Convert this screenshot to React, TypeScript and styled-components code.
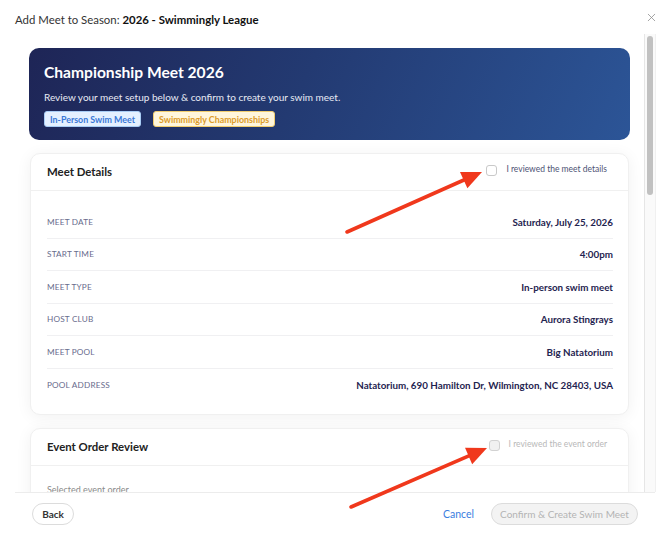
import { X } from "lucide-react";
import styled, { createGlobalStyle } from "styled-components";

const GlobalStyle = createGlobalStyle`
  html, body {
    margin: 0;
    padding: 0;
    background: #fff;
  }
  body {
    font-family: "Lato", "Open Sans", sans-serif;
    color: #222;
  }
  * {
    box-sizing: border-box;
  }
`;

const meetRows = [
  { label: "Meet Date", value: "Saturday, July 25, 2026" },
  { label: "Start Time", value: "4:00pm" },
  { label: "Meet Type", value: "In-person swim meet" },
  { label: "Host Club", value: "Aurora Stingrays" },
  { label: "Meet Pool", value: "Big Natatorium" },
  { label: "Pool Address", value: "Natatorium, 690 Hamilton Dr, Wilmington, NC 28403, USA" },
];

// order of events for the meet (below the fold in the screenshot)
const events = [
  "Mixed 8 & Under 100 Medley Relay",
  "Mixed 9-10 200 Medley Relay",
  "Mixed 11-12 200 Medley Relay",
  "Mixed 13-14 200 Medley Relay",
  "Mixed 15-18 200 Medley Relay",
  "Girls 8 & Under 25 Freestyle",
  "Boys 8 & Under 25 Freestyle",
  "Girls 9-10 50 Freestyle",
  "Boys 9-10 50 Freestyle",
  "Girls 11-12 50 Freestyle",
  "Boys 11-12 50 Freestyle",
  "Girls 13-14 50 Freestyle",
  "Boys 13-14 50 Freestyle",
  "Girls 15-18 50 Freestyle",
  "Boys 15-18 50 Freestyle",
];

const App = (): JSX.Element => {
  return (
    <>
      <GlobalStyle />
      <Modal>
        <Header>
          <HeaderTitle>
            Add Meet to Season: <strong>2026 - Swimmingly League</strong>
          </HeaderTitle>
          <CloseButton aria-label="Close">
            <X size={13} strokeWidth={1.4} />
          </CloseButton>
        </Header>

        <Body>
          <Content>
            <Banner>
              <BannerTitle>Championship Meet 2026</BannerTitle>
              <BannerText>
                Review your meet setup below &amp; confirm to create your swim meet.
              </BannerText>
              <Badges>
                <Badge $tone="blue">In-Person Swim Meet</Badge>
                <Badge $tone="yellow">Swimmingly Championships</Badge>
              </Badges>
            </Banner>

            <Card>
              <CardHeader>
                <CardTitle>Meet Details</CardTitle>
                <Review>
                  <Checkbox />
                  <ReviewLabel>I reviewed the meet details</ReviewLabel>
                </Review>
              </CardHeader>
              <CardBody>
                {meetRows.map((row) => (
                  <Row key={row.label}>
                    <RowLabel>{row.label}</RowLabel>
                    <RowValue>{row.value}</RowValue>
                  </Row>
                ))}
              </CardBody>
            </Card>

            <Card>
              <CardHeader>
                <CardTitle>Event Order Review</CardTitle>
                <Review>
                  <Checkbox $disabled />
                  <ReviewLabel $disabled>I reviewed the event order</ReviewLabel>
                </Review>
              </CardHeader>
              <EventBody>
                <SubLabel>Selected event order</SubLabel>
                <EventList>
                  {events.map((ev, i) => (
                    <EventItem key={ev}>
                      <EventNum>{i + 1}</EventNum>
                      {ev}
                    </EventItem>
                  ))}
                </EventList>
              </EventBody>
            </Card>
          </Content>
          <Track>
            <Thumb />
          </Track>
        </Body>

        <Footer>
          <BackButton>Back</BackButton>
          <FooterRight>
            <CancelLink>Cancel</CancelLink>
            <ConfirmButton disabled>Confirm &amp; Create Swim Meet</ConfirmButton>
          </FooterRight>
        </Footer>

        <Arrows width="670" height="548" viewBox="0 0 670 548">
          <line x1="347" y1="232" x2="465" y2="179.5" stroke="#f0381c" strokeWidth="3.6" strokeLinecap="round" />
          <polygon points="482,172 467.4,188.3 460,171.9" fill="#f0381c" />
          <line x1="351" y1="507" x2="470" y2="455.4" stroke="#f0381c" strokeWidth="3.6" strokeLinecap="round" />
          <polygon points="487,448 472.2,464.3 465,447.7" fill="#f0381c" />
        </Arrows>
      </Modal>
    </>
  );
};

const Modal = styled.div`
  position: relative;
  width: 670px;
  height: 548px;
  display: flex;
  flex-direction: column;
  overflow: hidden;
`;

const Header = styled.div`
  height: 34px;
  flex: none;
  display: flex;
  align-items: flex-start;
  justify-content: space-between;
  padding: 12px 12px 0 15px;
`;

const HeaderTitle = styled.div`
  font-size: 11.4px;
  line-height: 16px;
  color: #333;

  strong {
    font-weight: 700;
    color: #111;
  }
`;

const CloseButton = styled.button`
  border: none;
  background: none;
  padding: 0;
  margin-top: -1px;
  color: #8a8a8a;
  display: flex;
  cursor: pointer;
`;

const Body = styled.div`
  flex: 1;
  min-height: 0;
  margin: 0 14px 0 15px;
  display: flex;
`;

const Content = styled.div`
  flex: 1;
  min-width: 0;
  overflow: hidden;
  padding: 14px 14px 14px 14px;
  display: flex;
  flex-direction: column;
  gap: 13px;
`;

const Track = styled.div`
  flex: none;
  width: 12px;
  background: #fafafa;
  border-left: 1px solid #e6e6e6;
  border-right: 1px solid #f0f0f0;
  padding: 2px 2px 0 2px;
`;

const Thumb = styled.div`
  height: 159px;
  border-radius: 4px;
  background: #c1c1c1;
`;

const Banner = styled.div`
  flex: none;
  height: 92px;
  border-radius: 10px;
  padding: 14px 15px;
  background: linear-gradient(115deg, #1e2556 0%, #233a72 45%, #2c5597 100%);
  color: #fff;
`;

const BannerTitle = styled.div`
  font-size: 15.6px;
  font-weight: 700;
  line-height: 20px;
`;

const BannerText = styled.div`
  margin-top: 8px;
  font-size: 10px;
  line-height: 14px;
  color: #e8ebf5;
`;

const Badges = styled.div`
  display: flex;
  gap: 12px;
  margin-top: 7px;
`;

const Badge = styled.span<{ $tone: "blue" | "yellow" }>`
  display: inline-flex;
  align-items: center;
  height: 16px;
  padding: 0 5px;
  border-radius: 3px;
  font-size: 8.9px;
  font-weight: 700;
  background: ${(p) => (p.$tone === "blue" ? "#e4f0ff" : "#fff6dc")};
  border: 1px solid ${(p) => (p.$tone === "blue" ? "#a9cdf5" : "#f1cd6e")};
  color: ${(p) => (p.$tone === "blue" ? "#3a78d6" : "#dc9c2a")};
`;

const Card = styled.div`
  flex: none;
  margin: 0 1px;
  background: #fff;
  border: 1px solid #f0f0f0;
  border-radius: 10px;
  box-shadow: 0 2px 16px rgba(0, 0, 0, 0.06);
`;

const CardHeader = styled.div`
  height: 37px;
  display: flex;
  align-items: center;
  justify-content: space-between;
  padding: 0 21px 0 16px;
  border-bottom: 1px solid #f0f0f0;
`;

const CardTitle = styled.div`
  font-size: 11.4px;
  font-weight: 700;
  color: #222;
  margin-top: -2px;
`;

const Review = styled.label`
  display: flex;
  align-items: flex-start;
  gap: 9px;
  margin-top: -5px;
`;

const Checkbox = styled.span<{ $disabled?: boolean }>`
  width: 11px;
  height: 11px;
  margin-top: 1px;
  border-radius: 3px;
  border: 1px solid ${(p) => (p.$disabled ? "#d2d2d2" : "#c9c9c9")};
  background: ${(p) => (p.$disabled ? "#f1f1f1" : "#fff")};
`;

const ReviewLabel = styled.span<{ $disabled?: boolean }>`
  font-size: 8.5px;
  line-height: 11px;
  color: ${(p) => (p.$disabled ? "#b8b8b8" : "#4d5274")};
`;

const CardBody = styled.div`
  padding: 15px 15px 13px 16px;
`;

const Row = styled.div`
  height: 32.5px;
  display: flex;
  align-items: center;
  justify-content: space-between;
  border-bottom: 1px solid #f0f0f2;

  &:last-child {
    border-bottom: none;
  }
`;

const RowLabel = styled.span`
  font-size: 8.2px;
  text-transform: uppercase;
  letter-spacing: 0.2px;
  color: #686b8c;
`;

const RowValue = styled.span`
  font-size: 9.8px;
  font-weight: 700;
  color: #1f2450;
`;

const EventBody = styled.div`
  padding: 18px 16px 16px;
`;

const SubLabel = styled.div`
  font-size: 9px;
  color: #8a8a8a;
`;

const EventList = styled.ol`
  list-style: none;
  margin: 10px 0 0;
  padding: 0;
`;

const EventItem = styled.li`
  display: flex;
  align-items: center;
  gap: 10px;
  height: 32px;
  border-bottom: 1px solid #f0f0f2;
  font-size: 9.6px;
  font-weight: 700;
  color: #1f2450;
`;

const EventNum = styled.span`
  width: 16px;
  color: #6c6f8f;
  font-weight: 400;
`;

const Footer = styled.div`
  height: 56px;
  flex: none;
  margin: 0 15px;
  border-top: 1px solid #ececec;
  padding: 10px 17px 0;
  display: flex;
  align-items: flex-start;
  justify-content: space-between;
`;

const FooterRight = styled.div`
  display: flex;
  align-items: center;
  gap: 17px;
`;

const PillButton = styled.button`
  height: 22px;
  border-radius: 11px;
  border: 1px solid #dcdcdc;
  font-family: "Lato", sans-serif;
  font-size: 10px;
  padding: 0 10px;
  cursor: pointer;
`;

const BackButton = styled(PillButton)`
  width: 42px;
  padding: 0;
  background: #fff;
  font-weight: 700;
  color: #333;
`;

const CancelLink = styled.span`
  font-size: 10.5px;
  color: #3a7de0;
  cursor: pointer;
`;

const ConfirmButton = styled(PillButton)`
  width: 147px;
  padding: 0;
  font-size: 10px;
  background: #f3f3f3;
  color: #b3b3b3;
  cursor: default;
`;

const Arrows = styled.svg`
  position: absolute;
  left: 0;
  top: 0;
  pointer-events: none;
  z-index: 10;
`;

export default App;
